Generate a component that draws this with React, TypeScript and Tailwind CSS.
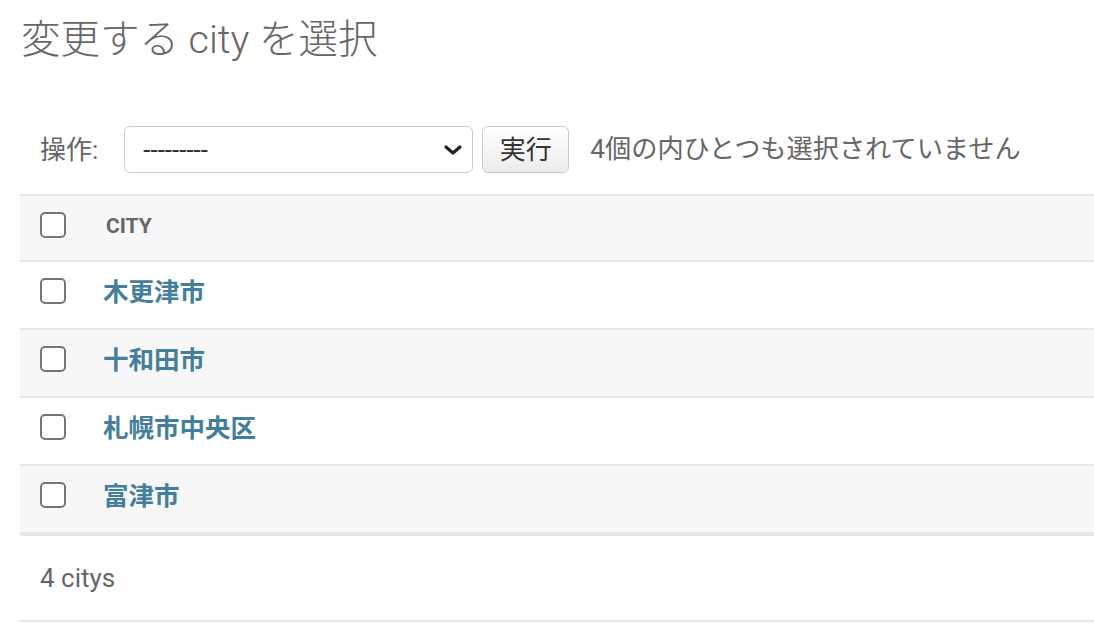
import React from 'react';

const cities = ['木更津市', '十和田市', '札幌市中央区', '富津市'];

const Box: React.FC = () => (
  <div className="w-[26px] h-[26px] shrink-0 rounded-[5px] border-2 border-[#767676] bg-white" />
);

const App: React.FC = () => {
  return (
    <div
      className="w-[1094px] h-[636px] bg-white text-[#666] overflow-hidden"
      style={{ fontFamily: 'Roboto, "Noto Sans CJK JP", sans-serif' }}
    >
      {/* Title */}
      <h1 className="pl-[21px] pt-[12px] text-[39.5px] leading-[56px] font-light text-[#666]">
        変更する city を選択
      </h1>

      {/* Actions */}
      <div className="pl-[20px] mt-[58px] flex items-center h-[47px]">
        <span className="ml-[20px] text-[26px] leading-none">操作:</span>
        <div className="ml-[26px] w-[349px] h-[47px] rounded-[6px] border-[1.5px] border-[#ccc] bg-white flex items-center justify-between pl-[18px] pr-[8px]">
          <span className="text-[26px] text-[#333] leading-none">---------</span>
          <svg width="20" height="14" viewBox="0 0 20 14" className="mr-[1px]">
            <path d="M3 4l7 6 7-6" fill="none" stroke="#222" strokeWidth="3.2" strokeLinecap="round" strokeLinejoin="round" />
          </svg>
        </div>
        <button className="ml-[9px] w-[87px] h-[47px] rounded-[6px] border-[1.5px] border-[#ccc] bg-gradient-to-b from-white to-[#ececec] text-[26px] text-[#333] leading-none">
          実行
        </button>
        <span className="ml-[21px] text-[26.2px] leading-none">4個の内ひとつも選択されていません</span>
      </div>

      {/* Table */}
      <div className="ml-[20px] mt-[21px]">
        <div className="h-[68px] bg-[#f7f7f7] border-t-2 border-b-2 border-[#e6e6e6] flex items-start pt-[16px] pl-[20px]">
          <Box />
          <span className="ml-[40px] mt-[3px] text-[21px] font-bold text-[#666] leading-[22px]">CITY</span>
        </div>
        {cities.map((c, i) => (
          <div
            key={c}
            className={`h-[68px] border-b-2 border-[#e6e6e6] flex items-start pt-[16px] pl-[20px] ${
              i % 2 === 1 ? 'bg-[#f7f7f7]' : 'bg-white'
            }`}
          >
            <Box />
            <a href="#" className="ml-[37px] text-[25.5px] font-bold text-[#447e9b] leading-[28px]">
              {c}
            </a>
          </div>
        ))}
        <div className="h-[88px] border-t-2 border-b-2 border-[#e6e6e6] flex items-center pl-[20px]">
          <span className="text-[26px] leading-none">4 citys</span>
        </div>
      </div>
    </div>
  );
};

export default App;
